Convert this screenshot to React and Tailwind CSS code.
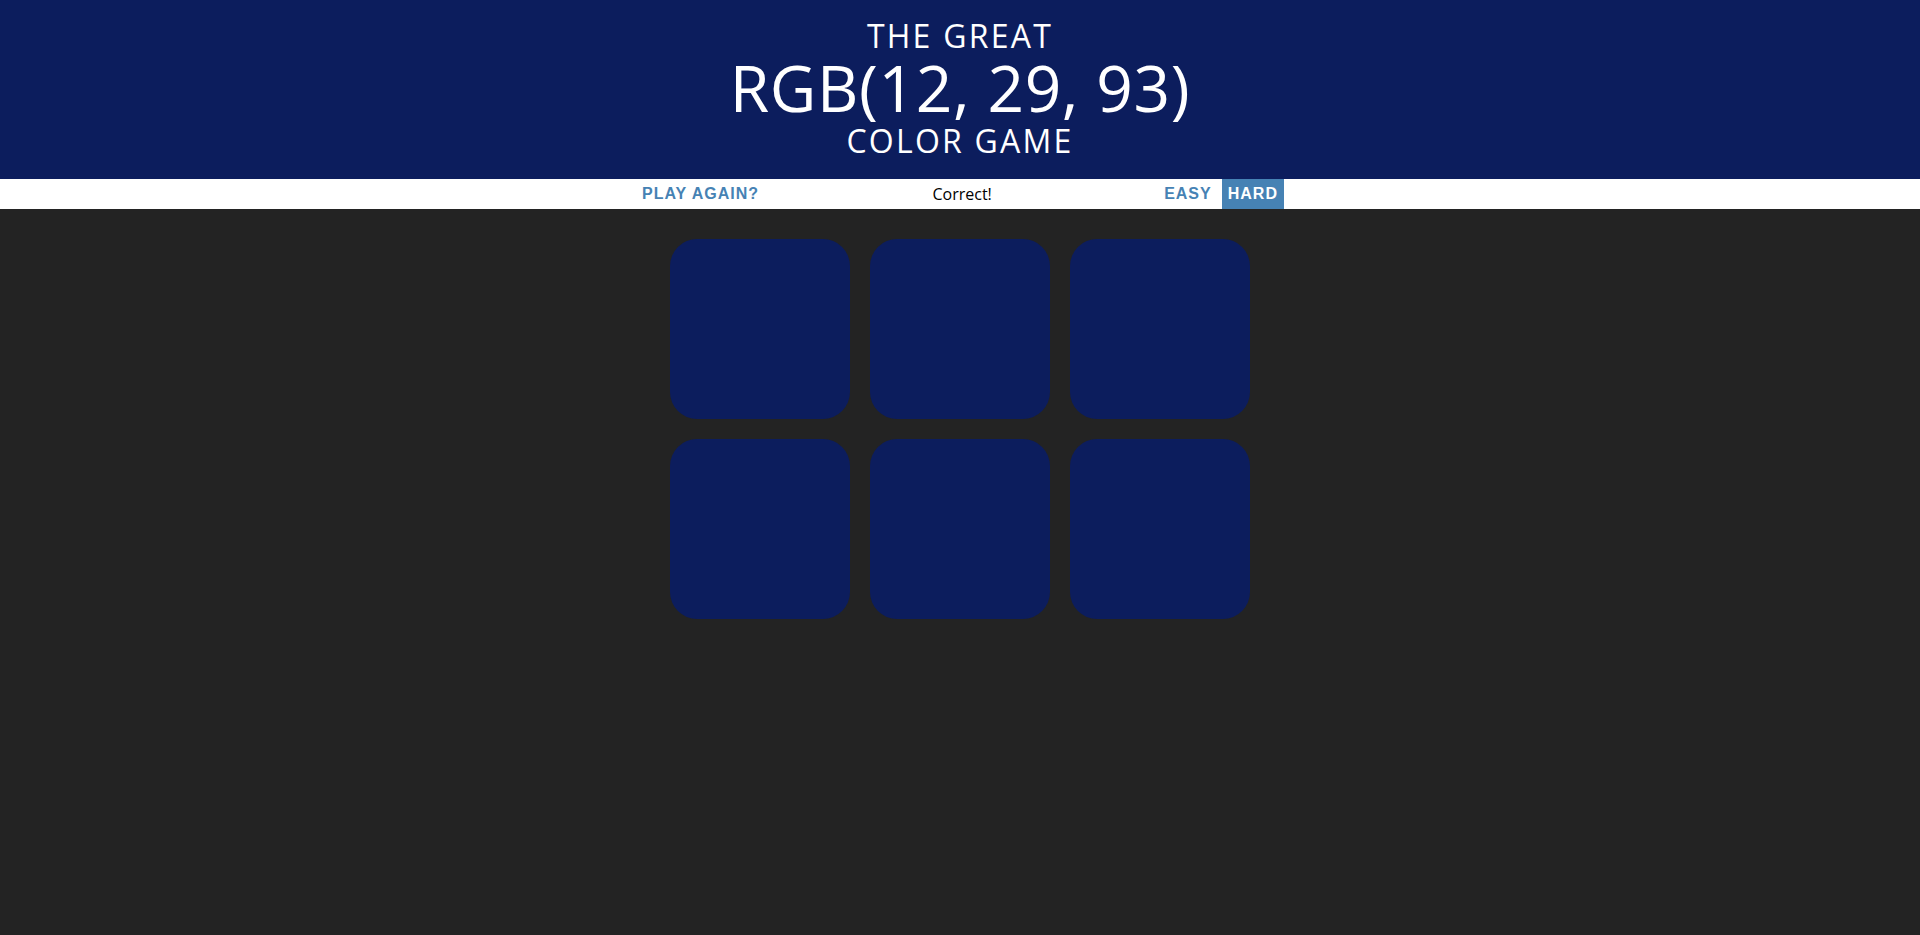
import React, { useState } from 'react';

const TARGET = 'rgb(12, 29, 93)';

const randomColor = () => {
  const r = Math.floor(Math.random() * 256);
  const g = Math.floor(Math.random() * 256);
  const b = Math.floor(Math.random() * 256);
  return `rgb(${r}, ${g}, ${b})`;
};

const App = () => {
  const [hard, setHard] = useState(true);
  const [picked, setPicked] = useState(TARGET);
  const [colors, setColors] = useState(Array(6).fill(TARGET));
  const [message, setMessage] = useState('Correct!');
  const [won, setWon] = useState(true);

  const reset = (isHard = hard) => {
    const next = Array.from({ length: isHard ? 6 : 3 }, randomColor);
    setColors(next);
    setPicked(next[Math.floor(Math.random() * next.length)]);
    setMessage('');
    setWon(false);
  };

  const pick = (color) => {
    if (color === picked) {
      setColors(colors.map(() => picked));
      setMessage('Correct!');
      setWon(true);
    } else {
      setColors(colors.map((c) => (c === color ? '#232323' : c)));
      setMessage('Try Again');
    }
  };

  return (
    <div className="min-h-[935px] bg-[#232323] font-['Open_Sans',sans-serif]">
      {/* Header */}
      <h1
        className="pt-[18px] pb-[21px] text-center font-normal uppercase text-white"
        style={{ backgroundColor: won ? picked : '#4682b4' }}
      >
        <div className="text-[32px] leading-[35px] tracking-[0.07em]">The Great</div>
        <div className="text-[64px] leading-[70px] tracking-[0.01em]">{picked.toUpperCase()}</div>
        <div className="text-[32px] leading-[35px] tracking-[0.07em]">Color Game</div>
      </h1>

      {/* Stripe */}
      <div className="flex h-[30px] items-stretch justify-center bg-white text-black">
        <button
          onClick={() => reset()}
          className="px-[6px] font-['Liberation_Sans',Arial,sans-serif] text-[16px] font-bold uppercase tracking-[1px] text-[#4682b4]"
        >
          {won ? 'Play Again?' : 'New Colors'}
        </button>
        <span className="ml-[5px] flex w-[384px] items-center justify-center text-[16px]">{message}</span>
        <button
          onClick={() => { setHard(false); reset(false); }}
          className={`ml-[4px] px-[6px] font-['Liberation_Sans',Arial,sans-serif] text-[16px] font-bold uppercase tracking-[1px] ${hard ? 'text-[#4682b4]' : 'bg-[#4682b4] text-white'}`}
        >
          Easy
        </button>
        <button
          onClick={() => { setHard(true); reset(true); }}
          className={`ml-[4px] px-[6px] font-['Liberation_Sans',Arial,sans-serif] text-[16px] font-bold uppercase tracking-[1px] ${hard ? 'bg-[#4682b4] text-white' : 'text-[#4682b4]'}`}
        >
          Hard
        </button>
      </div>

      {/* Squares */}
      <div className="mx-auto mt-[20px] flex max-w-[600px] flex-wrap">
        {colors.map((c, i) => (
          <div
            key={i}
            onClick={() => pick(c)}
            className="m-[10px] h-[180px] w-[180px] cursor-pointer rounded-[27px]"
            style={{ backgroundColor: c }}
          />
        ))}
      </div>
    </div>
  );
};

export default App;
